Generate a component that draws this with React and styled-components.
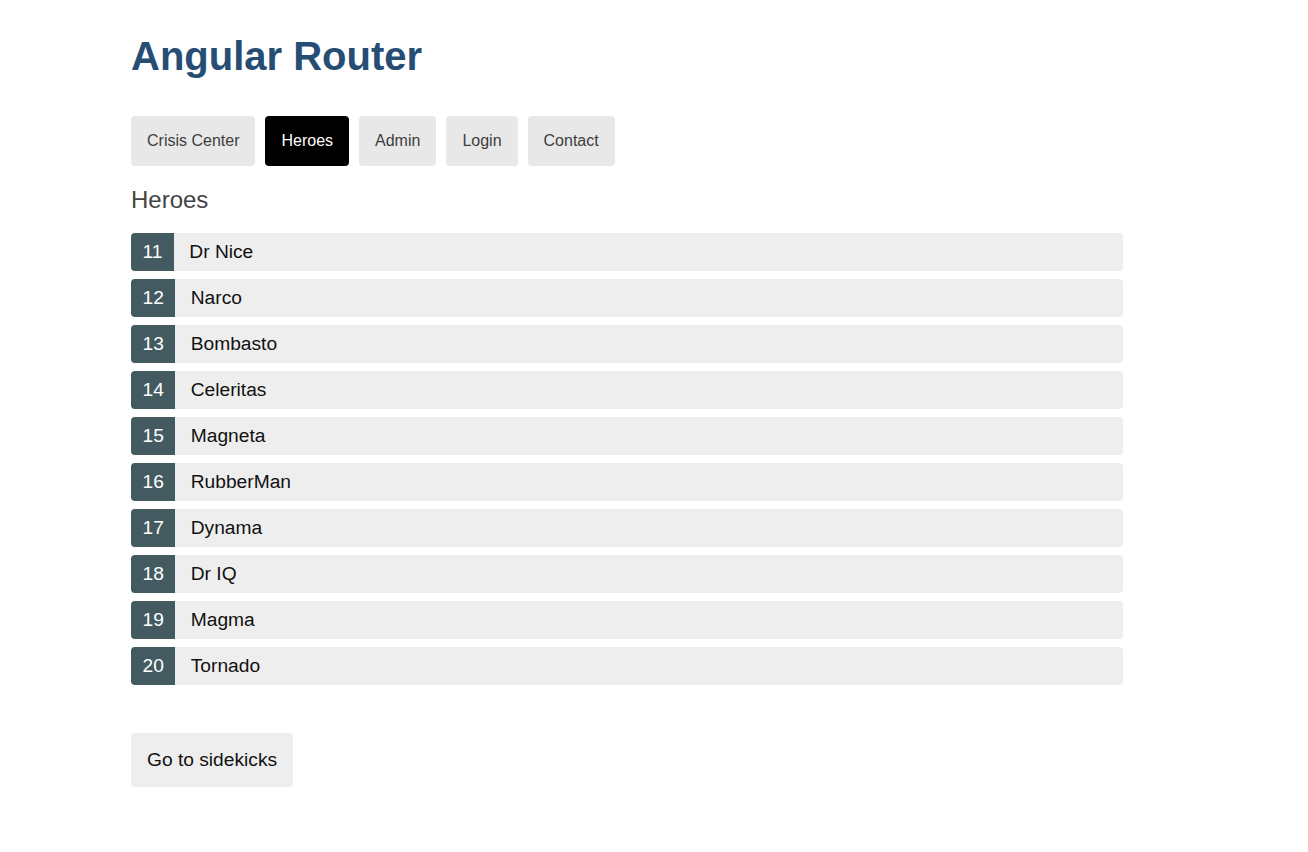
import React from "react";
import styled, { createGlobalStyle } from "styled-components";

const Global = createGlobalStyle`
  html, body { margin: 0; padding: 0; background: #fff; }
  body { font-family: "Liberation Sans", Arial, sans-serif; }
`;

const Page = styled.div`
  padding: 33px 0 40px 131px;
  width: 992px;
`;

const Title = styled.h1`
  margin: 0;
  font-size: 40px;
  line-height: 46px;
  font-weight: bold;
  color: #264d73;
`;

const Nav = styled.nav`
  display: flex;
  gap: 10px;
  margin-top: 37px;
`;

const NavLink = styled.a`
  display: block;
  padding: 0 16px;
  height: 50px;
  line-height: 50px;
  font-size: 16px;
  border-radius: 4px;
  text-decoration: none;
  background: ${(p) => (p.$active ? "#000" : "#e8e8e8")};
  color: ${(p) => (p.$active ? "#fff" : "#3d3d3d")};
`;

const Heading = styled.h2`
  margin: 20px 0 0;
  font-size: 24px;
  line-height: 28px;
  font-weight: normal;
  color: #444;
`;

const List = styled.ul`
  list-style: none;
  margin: 19px 0 0;
  padding: 0;
  display: flex;
  flex-direction: column;
  gap: 8px;
`;

const Row = styled.li`
  display: flex;
  align-items: center;
  height: 38px;
  background: #eee;
  border-radius: 4px;
  font-size: 19.2px;
  color: #111;
`;

const Badge = styled.span`
  display: flex;
  align-items: center;
  justify-content: center;
  align-self: stretch;
  padding: 0 11.5px;
  background: #435b60;
  color: #fff;
  border-radius: 4px 0 0 4px;
  margin-right: 15.4px;
`;

const Button = styled.button`
  margin-top: 48px;
  height: 54px;
  padding: 0 16px;
  border: none;
  border-radius: 4px;
  background: #eee;
  color: #111;
  font-family: "Liberation Sans", Arial, sans-serif;
  font-size: 19.2px;
`;

const heroes = [
  [11, "Dr Nice"],
  [12, "Narco"],
  [13, "Bombasto"],
  [14, "Celeritas"],
  [15, "Magneta"],
  [16, "RubberMan"],
  [17, "Dynama"],
  [18, "Dr IQ"],
  [19, "Magma"],
  [20, "Tornado"],
];

export default function App() {
  return (
    <Page>
      <Global />
      <Title>Angular Router</Title>
      <Nav>
        <NavLink>Crisis Center</NavLink>
        <NavLink $active>Heroes</NavLink>
        <NavLink>Admin</NavLink>
        <NavLink>Login</NavLink>
        <NavLink>Contact</NavLink>
      </Nav>
      <Heading>Heroes</Heading>
      <List>
        {heroes.map(([id, name]) => (
          <Row key={id}>
            <Badge>{id}</Badge>
            {name}
          </Row>
        ))}
      </List>
      <Button>Go to sidekicks</Button>
    </Page>
  );
}
